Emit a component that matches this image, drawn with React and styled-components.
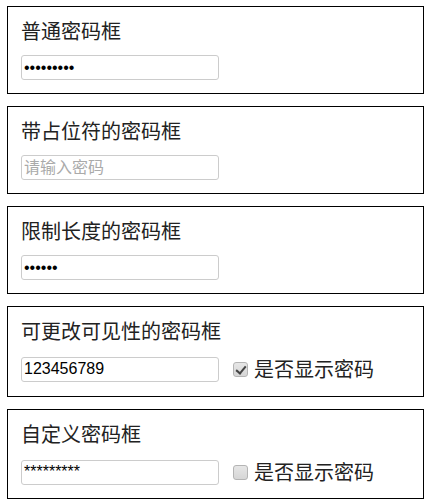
import React, { useState } from 'react';
import styled, { createGlobalStyle } from 'styled-components';

const GlobalStyle = createGlobalStyle`
  body {
    margin: 0;
    background: #fff;
    font-family: "Liberation Sans", "Noto Sans CJK SC", sans-serif;
  }
`;

const Page = styled.div`
  padding: 6px 5px 6px 7px;
`;

const Card = styled.div`
  border: 1px solid #000;
  padding: 12px 13px ${(p) => (p.tight ? 12 : 13)}px;
  margin-bottom: 12px;
`;

const Title = styled.div`
  font-family: "Noto Sans CJK SC", sans-serif;
  font-size: 20px;
  line-height: 24px;
  color: #222;
  margin-bottom: 12px;
`;

const Row = styled.div`
  display: flex;
  align-items: center;
`;

const Field = styled.input`
  box-sizing: border-box;
  width: 198px;
  height: 25px;
  margin: 0;
  padding: 0 2px;
  border: 1px solid #ccc;
  border-radius: 3px;
  font-family: "Liberation Sans", "Noto Sans CJK SC", sans-serif;
  font-size: 16px;
  color: #000;
  outline: none;

  &::placeholder {
    color: #aaa;
  }
`;

const Toggle = styled.label`
  display: flex;
  align-items: center;
  margin-left: 14px;
  font-family: "Noto Sans CJK SC", sans-serif;
  font-size: 20px;
  line-height: 28px;
  color: #222;
  cursor: pointer;
`;

const Check = styled.input`
  appearance: none;
  box-sizing: border-box;
  width: 15px;
  height: 15px;
  margin: 0 6px 0 0;
  border: 1px solid #b4b4b4;
  border-radius: 3px;
  background: linear-gradient(#e6e6e6, #d6d6d6);
  position: relative;

  &:checked::after {
    content: "";
    position: absolute;
    left: 4px;
    top: 1px;
    width: 4px;
    height: 8px;
    border: solid #444;
    border-width: 0 2.5px 2.5px 0;
    transform: rotate(40deg);
  }
`;

function MaskedInput({ value, onChange, visible }) {
  const handle = (e) => {
    const next = e.target.value;
    if (visible) return onChange(next);
    if (next.length < value.length) return onChange(value.slice(0, next.length));
    onChange(value + next.slice(value.length).replace(/\*/g, ''));
  };
  return (
    <Field
      type="text"
      value={visible ? value : '*'.repeat(value.length)}
      onChange={handle}
    />
  );
}

export default function App() {
  const [plain, setPlain] = useState('123456789');
  const [limited, setLimited] = useState('123456');
  const [shown, setShown] = useState('123456789');
  const [showIt, setShowIt] = useState(true);
  const [custom, setCustom] = useState('123456789');
  const [showCustom, setShowCustom] = useState(false);

  return (
    <Page>
      <GlobalStyle />
      <Card>
        <Title>普通密码框</Title>
        <Row>
          <Field type="password" value={plain} onChange={(e) => setPlain(e.target.value)} />
        </Row>
      </Card>
      <Card>
        <Title>带占位符的密码框</Title>
        <Row>
          <Field type="password" placeholder="请输入密码" />
        </Row>
      </Card>
      <Card>
        <Title>限制长度的密码框</Title>
        <Row>
          <Field
            type="password"
            maxLength={6}
            value={limited}
            onChange={(e) => setLimited(e.target.value)}
          />
        </Row>
      </Card>
      <Card>
        <Title>可更改可见性的密码框</Title>
        <Row>
          <Field
            type={showIt ? 'text' : 'password'}
            value={shown}
            onChange={(e) => setShown(e.target.value)}
          />
          <Toggle>
            <Check type="checkbox" checked={showIt} onChange={(e) => setShowIt(e.target.checked)} />
            是否显示密码
          </Toggle>
        </Row>
      </Card>
      <Card tight>
        <Title>自定义密码框</Title>
        <Row>
          <MaskedInput value={custom} onChange={setCustom} visible={showCustom} />
          <Toggle>
            <Check
              type="checkbox"
              checked={showCustom}
              onChange={(e) => setShowCustom(e.target.checked)}
            />
            是否显示密码
          </Toggle>
        </Row>
      </Card>
    </Page>
  );
}
